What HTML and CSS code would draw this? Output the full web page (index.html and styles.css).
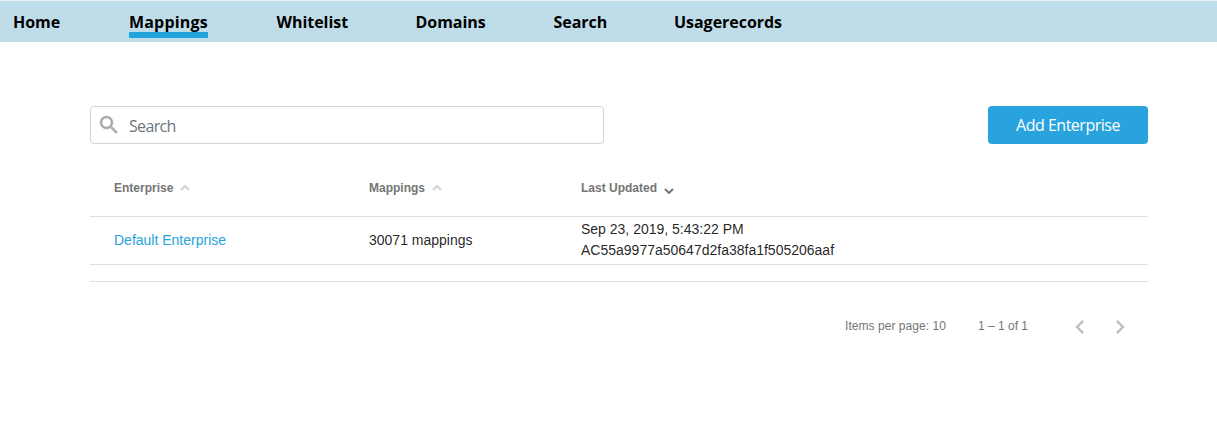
FILE: index.html
```html
<!DOCTYPE html>
<html lang="en">
<head>
<meta charset="utf-8">
<title>Mappings</title>
<link rel="stylesheet" href="styles.css">
</head>
<body>
<nav class="nav">
  <a class="nav-link home">Home</a>
  <a class="nav-link mappings active">Mappings</a>
  <a class="nav-link whitelist">Whitelist</a>
  <a class="nav-link domains">Domains</a>
  <a class="nav-link find">Search</a>
  <a class="nav-link usage">Usagerecords</a>
</nav>
<main class="content">
  <div class="toolbar">
    <div class="search">
      <svg class="search-icon" viewBox="0 0 24 24"><path d="M15.5 14h-.79l-.28-.27A6.471 6.471 0 0 0 16 9.5 6.5 6.5 0 1 0 9.5 16c1.61 0 3.09-.59 4.23-1.57l.27.28v.79l5 4.99L20.49 19l-4.99-5zm-6 0C7.01 14 5 11.99 5 9.5S7.01 5 9.5 5 14 7.01 14 9.5 11.99 14 9.5 14z"/></svg>
      <span class="placeholder">Search</span>
    </div>
    <button class="add">Add Enterprise</button>
  </div>
  <div class="table">
    <div class="row head">
      <div class="cell"><span>Enterprise</span><svg class="sort" viewBox="0 0 10 6"><path d="M1 5l4-4 4 4"/></svg></div>
      <div class="cell"><span>Mappings</span><svg class="sort" viewBox="0 0 10 6"><path d="M1 5l4-4 4 4"/></svg></div>
      <div class="cell"><span>Last Updated</span><svg class="sort sorted" viewBox="0 0 10 6"><path d="M1 1l4 4 4-4"/></svg></div>
    </div>
    <div class="row body">
      <div class="cell"><a class="link">Default Enterprise</a></div>
      <div class="cell">30071 mappings</div>
      <div class="cell updated"><span>Sep 23, 2019, 5:43:22 PM</span><span class="account">AC55a9977a50647d2fa38fa1f505206aaf</span></div>
    </div>
    <div class="row spacer"></div>
  </div>
  <div class="paginator">
    <span class="size">Items per page:&nbsp;10</span>
    <span class="range">1 – 1 of 1</span>
    <svg class="arrow" viewBox="0 0 24 24"><path d="M15.41 7.41L14 6l-6 6 6 6 1.41-1.41L10.83 12z"/></svg>
    <svg class="arrow" viewBox="0 0 24 24"><path d="M10 6L8.59 7.41 13.17 12l-4.58 4.59L10 18l6-6z"/></svg>
  </div>
</main>
</body>
</html>
```

FILE: styles.css
```css
* { box-sizing: border-box; }
body { margin: 0; background: #fff; font-family: "Liberation Sans", Arial, sans-serif; font-size: 14px; color: rgba(0,0,0,.87); }
.nav {
  display: grid;
  grid-template-columns: 116px 147.5px 139px 138px 120.5px auto;
  justify-content: start;
  justify-items: start;
  height: 42px;
  padding: 10px 13px 0;
  border-top: 1px solid #e9f4f8;
  background: #bfdde8;
  background-clip: padding-box;
  font: 700 16px/23px "Open Sans", "Noto Sans", sans-serif;
  letter-spacing: -.03px;
  color: #000;
}
.nav-link { height: 27px; white-space: nowrap; }
.active { border-bottom: 6px solid #1fa4dc; letter-spacing: .18px; }
.content { width: 1058px; margin: 64px 0 0 90px; }
.toolbar { display: flex; justify-content: space-between; }
.search {
  display: flex;
  align-items: center;
  width: 514px;
  height: 38px;
  padding-left: 6px;
  border: 1px solid #ced4da;
  border-radius: 4px;
  font: 16px/24px "Open Sans", "Noto Sans", sans-serif;
  color: #6c757d;
}
.search-icon { width: 24px; height: 24px; margin-right: 8px; fill: #a8a8a8; stroke: #a8a8a8; stroke-width: .5; }
.placeholder { padding-top: 1px; letter-spacing: -.65px; }
.add {
  width: 160px;
  height: 38px;
  padding: 0;
  border: 0;
  border-radius: 4px;
  background: #28a3dd;
  color: #fff;
  font: 16px/24px "Open Sans", "Noto Sans", sans-serif;
  letter-spacing: -.5px;
}
.table { margin-top: 16px; }
.row {
  display: grid;
  grid-template-columns: 255px 212px 1fr;
  align-items: center;
  height: 48px;
  padding-left: 24px;
  border-bottom: 1px solid #e0e0e0;
}
.head { height: 57px; font-size: 12px; font-weight: 700; color: #757575; }
.head .cell { display: flex; align-items: center; }
.body { padding-bottom: 2px; }
.sort { width: 10px; height: 6px; margin-left: 7px; fill: none; stroke: #d1d1d1; stroke-width: 2; }
.sorted { stroke: #757575; margin-top: 5px; }
.link { color: #28a3dd; }
.updated { display: flex; flex-direction: column; line-height: 21px; }
.spacer { height: 17px; }
.paginator { display: flex; align-items: center; height: 40px; margin-top: 24px; padding-left: 755px; font-size: 12px; color: #757575; }
.size { width: 133px; letter-spacing: .05px; }
.range { width: 88px; }
.arrow { width: 28px; height: 28px; margin: 2px 12px 0 0; fill: #bdbdbd; }
```
